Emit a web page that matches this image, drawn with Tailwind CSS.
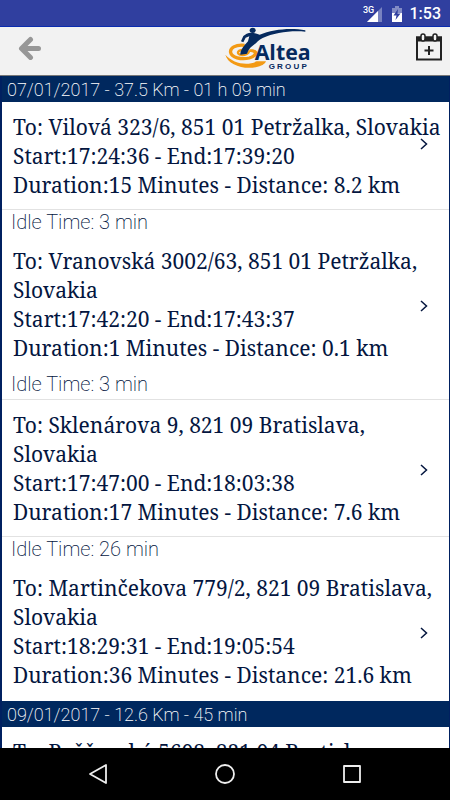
<!DOCTYPE html>
<html lang="en">
<head>
    <meta charset="UTF-8">
    <meta name="viewport" content="width=device-width, initial-scale=1.0">
    <title>Altea Group - Trips</title>
    <script src="https://cdn.jsdelivr.net/npm/@tailwindcss/browser@4"></script>
</head>
<body class="h-screen flex flex-col overflow-hidden bg-black font-['Roboto',sans-serif]">

    <!-- Status bar -->
    <div class="h-[27px] shrink-0 bg-[#303f9f] border-b border-[#0a2cb0] flex items-center justify-end pr-[9px] pt-0.5 text-white">
        <svg class="w-5 h-4" viewBox="0 0 20 16" aria-hidden="true">
            <path d="M19 1v15H4z" fill="#fff" fill-opacity=".35"/>
            <path d="M15 5v11H4z" fill="#fff"/>
            <text x="0" y="7" font-size="9" font-weight="500" fill="#fff">3G</text>
        </svg>
        <svg class="w-[10px] h-4 ml-[9px]" viewBox="0 0 10 16" aria-hidden="true">
            <path d="M3 0h4v2h3v5H0V2h3z" fill="#fff" fill-opacity=".4"/>
            <path d="M0 7h10v9H0z" fill="#fff"/>
            <path d="M6 3L1.500 9.500H4.500L3.500 14L8.500 7.500H5.500z" fill="#303f9f"/>
        </svg>
        <span class="ml-2 text-base font-medium leading-4">1:53</span>
    </div>

    <!-- Header -->
    <header class="h-[49px] shrink-0 bg-[#f2f2f2] border-b border-[#777] flex items-start pl-[18px] pr-2">
        <button type="button" aria-label="Back" class="mt-[9px]">
            <svg class="w-6 h-6" viewBox="0 0 24 24" fill="none" stroke="#979797" stroke-width="5" stroke-linecap="round" stroke-linejoin="round">
                <path d="M12.500 3.500L3.500 12.500L12.500 21.500M4 12.500H20.500"/>
            </svg>
        </button>
        <svg class="w-[85px] h-[44px] ml-auto mr-[106px]" viewBox="15 81 255 132" role="img" aria-label="Altea Group">
            <path d="M74 136C46 133 29 144 32 158C35 172 62 180 88 174C99 171 106 165 107 158" fill="none" stroke="#f39a14" stroke-width="10"/>
            <path d="M66 150C52 152 50 161 60 164C74 168 88 161 87 151" fill="none" stroke="#f39a14" stroke-width="7"/>
            <path d="M16 164C23 192 66 209 107 202C124 199 135 192 138 184L110 184C80 199 38 189 16 164Z" fill="#f39a14"/>
            <path d="M88 148C100 146 112 151 114 160L106 178C112 166 104 156 88 156Z" fill="#f39a14"/>
            <ellipse cx="98" cy="91" rx="9" ry="8" fill="#062a5e"/>
            <path d="M80 101C91 96 104 98 119 104C158 88 212 82 256 91V95C212 91 163 98 128 114C114 121 107 132 97 138C89 144 85 151 81 161L61 164C61 149 72 138 84 124L88 109L77 113L70 127L63 124L70 108Z" fill="#062a5e"/>
            <text x="104" y="179" font-family="Open Sans, sans-serif" font-size="64" font-weight="700" fill="#062a5e">Altea</text>
            <text x="146" y="207" font-family="Liberation Sans, sans-serif" font-size="24" font-weight="700" fill="#062a5e">G R O U P</text>
        </svg>
        <button type="button" aria-label="Add to calendar" class="mt-[6px]">
            <svg class="w-[26px] h-7" viewBox="0 0 26 28" fill="none" stroke="#222" stroke-width="2">
                <path d="M1 4.500h24v22H1z"/>
                <path d="M1 4.500h24v3H1z" fill="#222"/>
                <rect x="5" y="1" width="4" height="7" rx="2" fill="#f2f2f2" stroke-width="1.500"/>
                <rect x="17" y="1" width="4" height="7" rx="2" fill="#f2f2f2" stroke-width="1.500"/>
                <path d="M13 13v9M8.500 17.500h9"/>
            </svg>
        </button>
    </header>

    <!-- Trip list -->
    <main class="flex-1 min-h-0 overflow-hidden bg-white border-l-2 border-r border-[#002060] text-[#04163f]">
        <h2 class="h-[26px] -ml-[2px] -mr-px pl-[7px] bg-[#00285e] text-white text-lg leading-[28px] font-extralight">07/01/2017 - 37.5 Km - 01 h 09 min</h2>
        <ul class="font-['Noto_Serif','Liberation_Serif',serif] font-[380] text-[21px] leading-[29px]">
            <li class="relative pl-[11px] pr-1 pt-[11px] pb-[9px] border-b border-[#e2e2e2]">
                <p>To: Vilová 323/6, 851 01 Petržalka, Slovakia</p>
                <p>Start:17:24:36 - End:17:39:20</p>
                <p>Duration:15 Minutes - Distance: 8.2 km</p>
                <svg class="absolute right-[21px] top-9 w-2 h-3" viewBox="0 0 8 12" fill="none" stroke="#04163f" stroke-width="1.500"><path d="M1 1L6.500 6L1 11"/></svg>
            </li>
            <li class="h-[26px] pl-[9px] font-['Roboto',sans-serif] font-extralight text-[20px] leading-6">Idle Time: 3 min</li>
            <li class="relative pl-[11px] pr-1 pt-[11px] pb-[9px]">
                <p>To: Vranovská 3002/63, 851 01 Petržalka, Slovakia</p>
                <p>Start:17:42:20 - End:17:43:37</p>
                <p>Duration:1 Minutes - Distance: 0.1 km</p>
                <svg class="absolute right-[21px] top-16 w-2 h-3" viewBox="0 0 8 12" fill="none" stroke="#04163f" stroke-width="1.500"><path d="M1 1L6.500 6L1 11"/></svg>
            </li>
            <li class="h-7 pl-[9px] border-b border-[#e2e2e2] font-['Roboto',sans-serif] font-extralight text-[20px] leading-6">Idle Time: 3 min</li>
            <li class="relative pl-[11px] pr-3 pt-[11px] pb-[9px] border-b border-[#e2e2e2]">
                <p>To: Sklenárova 9, 821 09 Bratislava, Slovakia</p>
                <p>Start:17:47:00 - End:18:03:38</p>
                <p>Duration:17 Minutes - Distance: 7.6 km</p>
                <svg class="absolute right-[21px] top-16 w-2 h-3" viewBox="0 0 8 12" fill="none" stroke="#04163f" stroke-width="1.500"><path d="M1 1L6.500 6L1 11"/></svg>
            </li>
            <li class="h-[26px] pl-[9px] font-['Roboto',sans-serif] font-extralight text-[20px] leading-6">Idle Time: 26 min</li>
            <li class="relative pl-[11px] pr-1 py-[11px]">
                <p>To: Martinčekova 779/2, 821 09 Bratislava, Slovakia</p>
                <p>Start:18:29:31 - End:19:05:54</p>
                <p>Duration:36 Minutes - Distance: 21.6 km</p>
                <svg class="absolute right-[21px] top-16 w-2 h-3" viewBox="0 0 8 12" fill="none" stroke="#04163f" stroke-width="1.500"><path d="M1 1L6.500 6L1 11"/></svg>
            </li>
        </ul>
        <h2 class="h-[26px] -ml-[2px] -mr-px pl-[7px] bg-[#00285e] text-white text-lg leading-[28px] font-extralight">09/01/2017 - 12.6 Km - 45 min</h2>
        <ul class="font-['Noto_Serif','Liberation_Serif',serif] font-[380] text-[21px] leading-[29px]">
            <li class="pl-[11px] pr-1 pt-[11px] pb-[9px]">
                <p>To: Požčenská 5608, 821 04 Bratislava</p>
            </li>
        </ul>
    </main>

    <!-- Android navigation -->
    <nav class="h-[52px] shrink-0 bg-black flex items-center justify-center gap-[105px]">
        <button type="button" aria-label="Back">
            <svg class="w-[22px] h-[22px]" viewBox="0 0 22 22" fill="none" stroke="#eee" stroke-width="1.800" stroke-linejoin="round"><path d="M19 2v18L3 11z"/></svg>
        </button>
        <button type="button" aria-label="Home">
            <svg class="w-[22px] h-[22px]" viewBox="0 0 22 22" fill="none" stroke="#eee" stroke-width="1.800"><circle cx="11" cy="11" r="9"/></svg>
        </button>
        <button type="button" aria-label="Recent apps">
            <svg class="w-[22px] h-[22px]" viewBox="0 0 22 22" fill="none" stroke="#eee" stroke-width="1.800" stroke-linejoin="round"><path d="M3 3h16v16H3z"/></svg>
        </button>
    </nav>
</body>
</html>
